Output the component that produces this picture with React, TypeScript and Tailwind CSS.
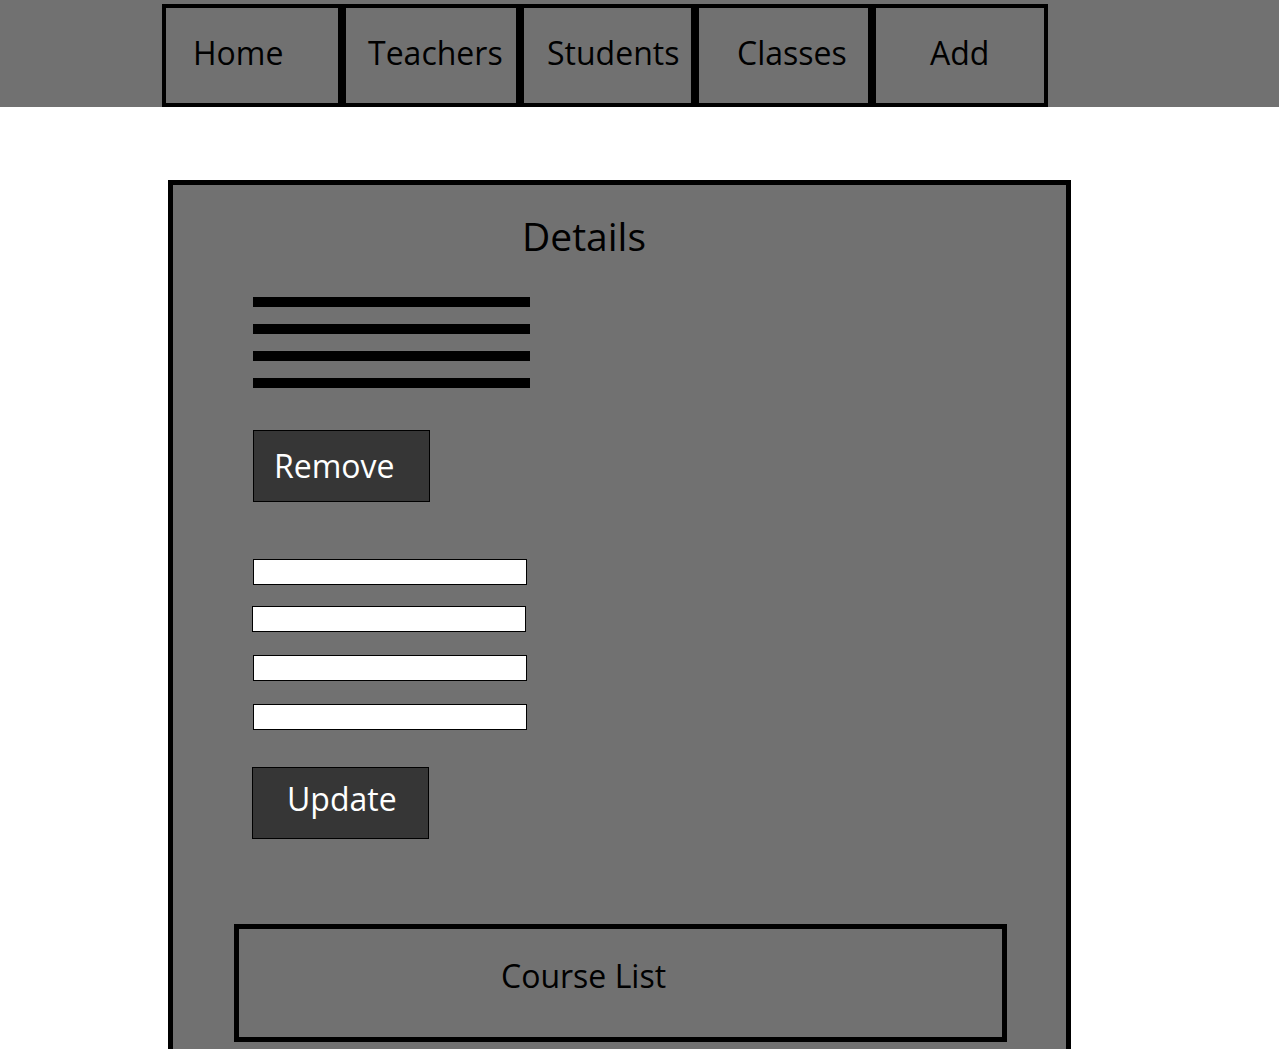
const navItems = [
  { label: "Home", width: "w-[180px]", pad: "pl-[27px]" },
  { label: "Teachers", width: "w-[178px]", pad: "pl-[22px]" },
  { label: "Students", width: "w-[175px]", pad: "pl-[23px]" },
  { label: "Classes", width: "w-[177px]", pad: "pl-[38px]" },
  { label: "Add", width: "w-[176px]", pad: "pl-[54px]" },
];

const inputs = [
  "mt-[57px] ml-[80px]",
  "mt-[21px] ml-[79px]",
  "mt-[23px] ml-[80px]",
  "mt-[23px] ml-[80px]",
];

export default function App() {
  return (
    <div className="h-[1049px] overflow-hidden bg-white font-['Open_Sans',sans-serif]">
      {/* Top nav */}
      <div className="h-[107px] bg-[#717171] pt-[4px]">
        <div className="ml-[162px] flex">
          {navItems.map((item) => (
            <div
              key={item.label}
              className={`h-[103px] border-[4px] border-black pt-[29px] text-[32px] leading-none text-black ${item.width} ${item.pad}`}
            >
              {item.label}
            </div>
          ))}
        </div>
      </div>

      {/* Details panel */}
      <div className="ml-[168px] mt-[73px] w-[903px] border-[5px] border-black bg-[#717171] pb-[60px]">
        <h2 className="ml-[349px] mt-[31px] text-[39px] font-normal leading-none text-black">
          Details
        </h2>

        <div className="ml-[80px] mt-[42px] flex w-[277px] flex-col gap-[17px]">
          <div className="h-[10px] bg-black" />
          <div className="h-[10px] bg-black" />
          <div className="h-[10px] bg-black" />
          <div className="h-[10px] bg-black" />
        </div>

        <button className="ml-[80px] mt-[42px] flex h-[72px] w-[177px] items-center border border-black bg-[#363636] pl-[20px] text-[32px] leading-none text-white">
          Remove
        </button>

        {inputs.map((cls, i) => (
          <input
            key={i}
            type="text"
            className={`block h-[26px] w-[274px] border border-black bg-white outline-none ${cls}`}
          />
        ))}

        <button className="ml-[79px] mt-[37px] block h-[72px] w-[177px] border border-black bg-[#363636] pb-[8px] pl-[34px] text-left text-[32px] leading-none text-white">
          Update
        </button>

        <div className="ml-[61px] mr-[59px] mt-[85px] h-[118px] border-[5px] border-black pl-[262px] pt-[31px] text-[32px] leading-none text-black">
          Course List
        </div>
      </div>
    </div>
  );
}
